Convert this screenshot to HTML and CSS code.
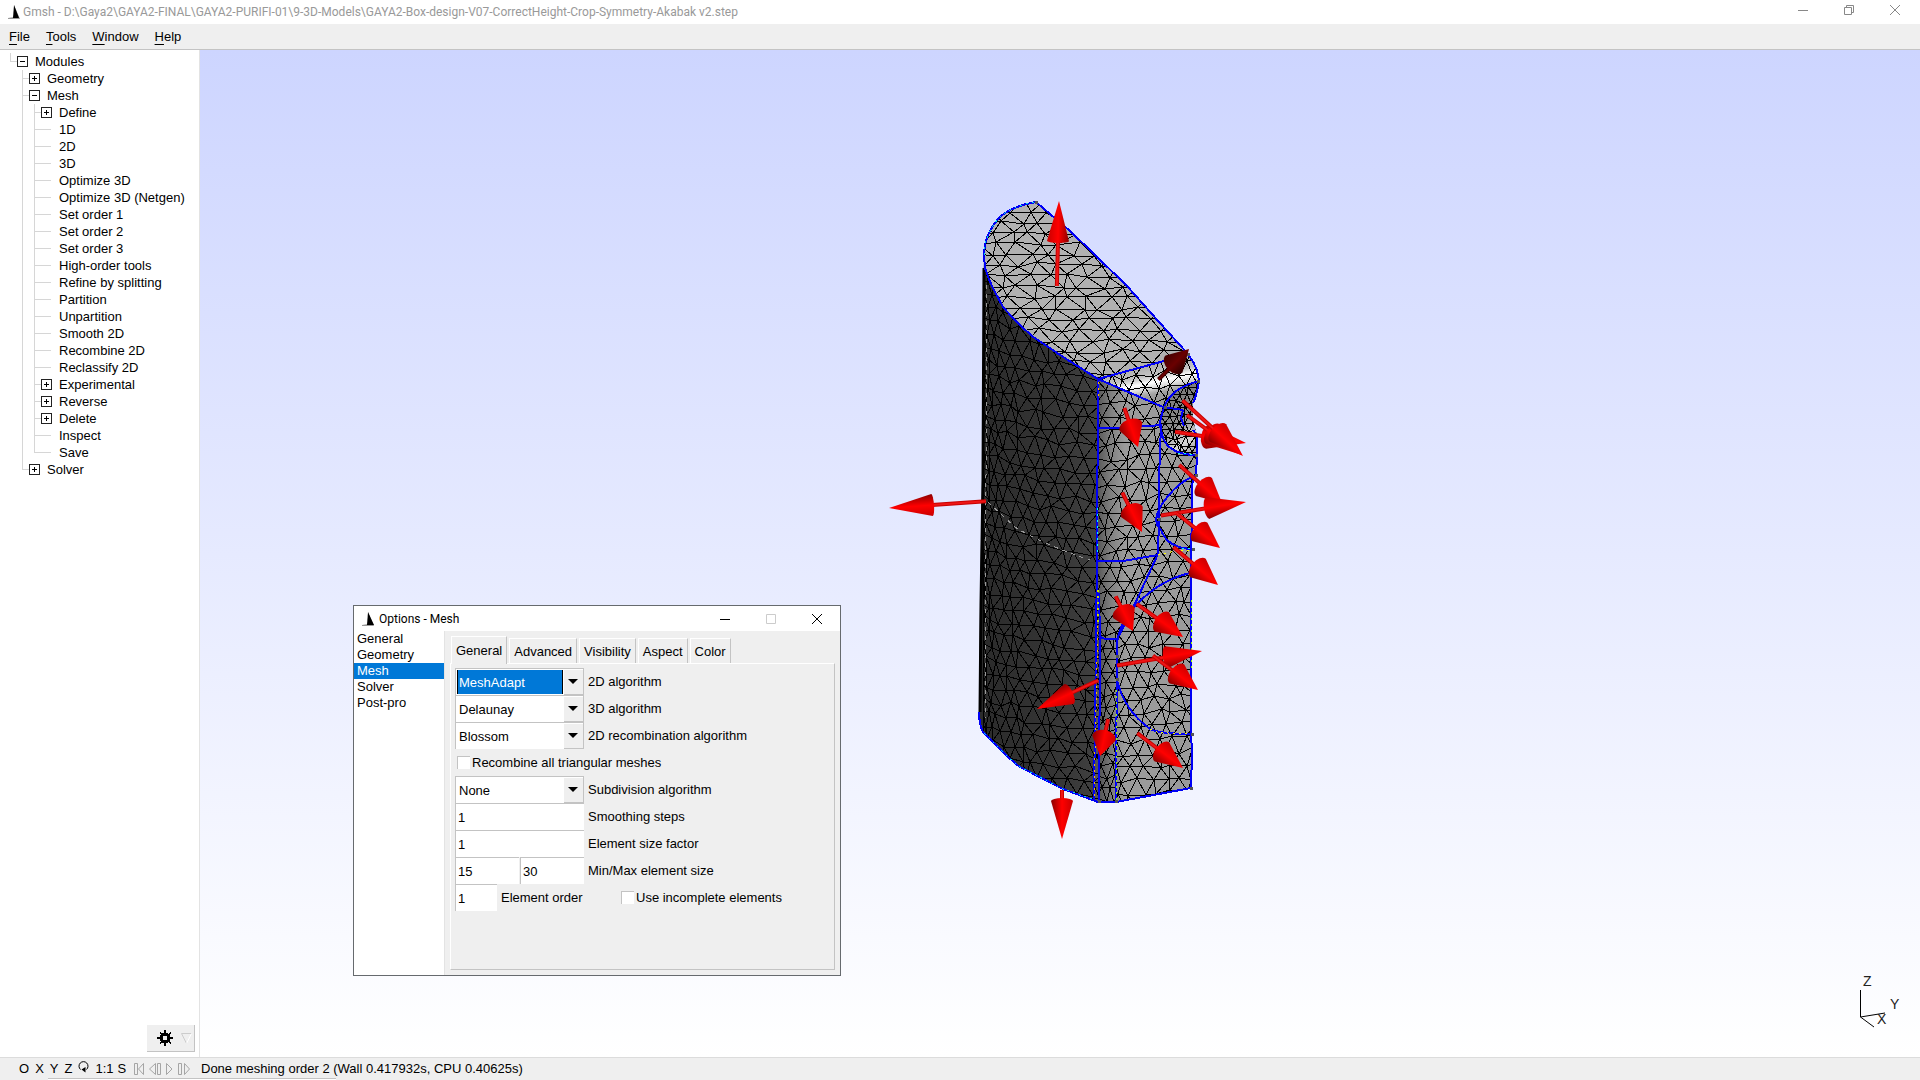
FILE: index.html
```html
<!DOCTYPE html>
<html lang="en">
<head>
<meta charset="utf-8">
<title>Gmsh - D:\Gaya2\GAYA2-FINAL\GAYA2-PURIFI-01\9-3D-Models\GAYA2-Box-design-V07-CorrectHeight-Crop-Symmetry-Akabak v2.step</title>
<link rel="stylesheet" href="styles.css">
</head>
<body>
<div class="app">
  <header class="titlebar">
    <svg class="logo" width="12" height="14" viewBox="0 0 12 14" aria-hidden="true"><path d="M6 0L12 14L0 14L0 13L6 12Z" fill="#999"/><path d="M6 0L11 13H5Z" fill="#000"/></svg>
    <h1 class="caption">Gmsh - D:\Gaya2\GAYA2-FINAL\GAYA2-PURIFI-01\9-3D-Models\GAYA2-Box-design-V07-CorrectHeight-Crop-Symmetry-Akabak v2.step</h1>
    <div class="winbtns winbtns-main">
      <button aria-label="Minimize"><svg width="12" height="12" viewBox="0 0 12 12"><path d="M1 6.500H11"/></svg></button>
      <button aria-label="Restore"><svg width="12" height="12" viewBox="0 0 12 12"><path d="M1.500 3.500H8.500V10.500H1.500ZM3.500 3.500V1.500H10.500V8.500H8.500"/></svg></button>
      <button aria-label="Close"><svg width="12" height="12" viewBox="0 0 12 12"><path d="M1 1L11 11M11 1L1 11"/></svg></button>
    </div>
  </header>

  <nav class="menubar">
    <button><u>F</u>ile</button><button><u>T</u>ools</button><button><u>W</u>indow</button><button><u>H</u>elp</button>
  </nav>

  <main class="workspace">
    <aside class="sidebar">
      <ul class="tree">
        <li class="root"><div class="row"><button class="box minus" aria-label="Collapse Modules"></button>Modules</div>
          <ul>
            <li><div class="row"><button class="box plus" aria-label="Expand Geometry"></button>Geometry</div></li>
            <li><div class="row"><button class="box minus" aria-label="Collapse Mesh"></button>Mesh</div>
              <ul>
                <li><div class="row"><button class="box plus" aria-label="Expand Define"></button>Define</div></li>
                <li class="leaf"><div class="row">1D</div></li>
                <li class="leaf"><div class="row">2D</div></li>
                <li class="leaf"><div class="row">3D</div></li>
                <li class="leaf"><div class="row">Optimize 3D</div></li>
                <li class="leaf"><div class="row">Optimize 3D (Netgen)</div></li>
                <li class="leaf"><div class="row">Set order 1</div></li>
                <li class="leaf"><div class="row">Set order 2</div></li>
                <li class="leaf"><div class="row">Set order 3</div></li>
                <li class="leaf"><div class="row">High-order tools</div></li>
                <li class="leaf"><div class="row">Refine by splitting</div></li>
                <li class="leaf"><div class="row">Partition</div></li>
                <li class="leaf"><div class="row">Unpartition</div></li>
                <li class="leaf"><div class="row">Smooth 2D</div></li>
                <li class="leaf"><div class="row">Recombine 2D</div></li>
                <li class="leaf"><div class="row">Reclassify 2D</div></li>
                <li><div class="row"><button class="box plus" aria-label="Expand Experimental"></button>Experimental</div></li>
                <li><div class="row"><button class="box plus" aria-label="Expand Reverse"></button>Reverse</div></li>
                <li><div class="row"><button class="box plus" aria-label="Expand Delete"></button>Delete</div></li>
                <li class="leaf"><div class="row">Inspect</div></li>
                <li class="leaf"><div class="row">Save</div></li>
              </ul>
            </li>
            <li><div class="row"><button class="box plus" aria-label="Expand Solver"></button>Solver</div></li>
          </ul>
        </li>
      </ul>
      <button class="gear" aria-label="Module options">
        <svg width="16" height="16" viewBox="0 0 16 16" shape-rendering="crispEdges"><path d="M7 0H9V3H11V4L13 2L14 3L12 5H13V7H16V9H13V11H12L14 13L13 14L11 12V13H9V16H7V13H5V12L3 14L2 13L4 11H3V9H0V7H3V5H4L2 3L3 2L5 4V3H7ZM6 6V10H10V6Z" fill="#000" fill-rule="evenodd"/></svg>
        <svg width="11" height="11" viewBox="0 0 11 11"><path d="M10.500 0.500H0.500L5.500 10.500" fill="none" stroke="#ccc"/><path d="M5.500 10.500L10.500 0.500" stroke="#fff"/></svg>
      </button>
    </aside>

    <section class="viewport">
      <svg class="scene" viewBox="200 50 1720 1007" role="img" aria-label="Meshed solid with surface normals">
        <defs>
          <linearGradient id="gSide"><stop offset="0" stop-color="#2b2b2b"/><stop offset=".6" stop-color="#343434"/><stop offset="1" stop-color="#404040"/></linearGradient>
          <linearGradient id="gFront" gradientUnits="userSpaceOnUse" x1="1097" y1="0" x2="1125" y2="0"><stop offset="0" stop-color="#555"/><stop offset=".5" stop-color="#808080"/><stop offset="1" stop-color="#9b9b9b"/></linearGradient>
          <linearGradient id="gFillet" gradientUnits="userSpaceOnUse" x1="1140" y1="366" x2="1147" y2="399"><stop offset="0" stop-color="#aaa"/><stop offset=".35" stop-color="#c4c4c4"/><stop offset=".55" stop-color="#fff"/><stop offset=".75" stop-color="#d0d0d0"/><stop offset="1" stop-color="#999" stop-opacity="0"/></linearGradient>
          <linearGradient id="gLens" gradientUnits="userSpaceOnUse" x1="1160" y1="395" x2="1198" y2="450"><stop offset="0" stop-color="#777"/><stop offset=".5" stop-color="#8c8c8c"/><stop offset=".8" stop-color="#d8d8d8"/><stop offset="1" stop-color="#999"/></linearGradient>
          <linearGradient id="gStrip"><stop offset="0" stop-color="#505050"/><stop offset="1" stop-color="#8c8c8c"/></linearGradient>
          <clipPath id="cTop"><path id="top" d="M1036 202Q1012 206 1000 217Q984 234 984 256L985 268Q989 281 995 292L1003 307Q1016 322 1032 336L1060 355L1098 379L1164 361L1188 354L1159 322L1127 286L1093 253L1070 231Z"/></clipPath>
          <clipPath id="cSide"><path id="side" d="M984 256L985 268Q989 281 995 292L1003 307Q1016 322 1032 336L1060 355L1098 379L1097 560L1096 640L1094 800L1063 789L1020 767Q1008 758 998 747L983 732Q979 724 979 712L980 605L982 480L983 360Z"/></clipPath>
          <clipPath id="cFront"><path id="front" d="M1098 379L1164 361L1188 354Q1194 362 1197 370L1199 381Q1197 395 1193 403V420L1197 435V455L1196 475L1192 484L1190 586V734L1192 752L1191 788L1116 802H1098L1094 800L1096 640L1097 560Z"/></clipPath>
          <clipPath id="cStrip"><path id="strip" d="M1098 590L1100 637L1108 639H1117L1116 802H1098Z"/></clipPath>
          <clipPath id="cLens"><path id="lens" d="M1199 381Q1172 388 1165 405T1161 430Q1164 455 1197 455V435L1193 420V403Z"/></clipPath>
        </defs>
        <use href="#side" fill="url(#gSide)"/>
        <use href="#top" fill="#b1b1b1"/>
        <use href="#front" fill="url(#gFront)"/>
        <path d="M1098 379L1164 361L1188 354L1197 370L1199 381L1164 407Z" fill="url(#gFillet)"/>
        <g class="wire">
          <g clip-path="url(#cSide)"><path id="meshSide"/></g>
          <g clip-path="url(#cTop)"><path id="meshTop"/></g>
          <g clip-path="url(#cFront)"><path id="meshFront"/></g>
        </g>
        <use href="#lens" fill="url(#gLens)"/>
        <use href="#strip" fill="url(#gStrip)"/>
        <g class="wire">
          <g clip-path="url(#cLens)"><path id="meshLens"/></g>
          <g clip-path="url(#cStrip)"><path id="meshStrip"/></g>
        </g>
        <path d="M984 268L983 480L981 605L980 712" stroke="#000" stroke-width="3" fill="none"/>
        <path class="dash" d="M987 285L986 480L985 718M988 502L1015 527Q1040 543 1090 560"/>
        <g class="edge">
          <path d="M1036 202L1070 231L1093 253L1127 286L1159 322L1188 354Q1194 362 1197 370L1199 381Q1197 395 1193 403"/>
          <path d="M1036 202Q1012 206 1000 217Q984 234 984 256L985 268Q989 281 995 292L1003 307Q1016 322 1032 336L1060 355L1098 379L1163 407L1183 410"/>
          <path d="M1098 379L1164 361M1098 379L1097 560L1096 640L1094 800M1099 593L1100 637L1099 802M1117 639L1116 802"/>
          <path d="M1098 428H1120L1162 425M1098 561H1123L1158 555M1100 637Q1104 639 1108 639H1117"/>
          <path d="M1161 425L1159 480V518L1158 554L1133 608L1119 636"/>
          <path d="M1199 381Q1172 388 1165 405T1161 430Q1164 455 1197 455M1183 410L1181 418L1184 426"/>
          <path d="M1196 476Q1180 480 1165 500T1161 530Q1168 549 1194 549"/>
          <path d="M1190 573Q1160 580 1137 604T1117 655V680Q1124 710 1150 729Q1160 734 1192 734"/>
          <path d="M1193 430L1197 435V455L1196 475L1192 484L1191 586V734L1192 752L1191 788L1116 802H1098L1063 789L1020 767Q1008 758 998 747L983 732Q979 724 979 712"/>
        </g>
        <g class="fleck">
          <path d="M1034 202Q1012 206 1000 217Q984 234 984 256" stroke="#00e0e0"/>
          <path d="M1092 799L1063 789L1020 767Q1008 758 998 747L983 732" stroke="#00d0ff"/>
          <path d="M1158 555L1180 550H1190M1150 729Q1160 734 1192 734" stroke="#ff0"/>
          <path d="M1191 600V672M1116 690V800M1098 590V625" stroke="#9f0"/>
          <path d="M1097 590V660L1094 798M1098 382V398" stroke="#fb0"/>
          <path d="M1097 508V552M1178 453L1196 455M1176 548H1192" stroke="#0ff"/>
        </g>
        <path class="nodes" d="M1035 201h3v3h-3zM1187 353h3v3h-3zM1197 380h3v3h-3zM1164 406h3v3h-3zM1195 454h3v3h-3zM1195 474h3v3h-3zM1158 518h3v3h-3zM1192 548h3v3h-3zM1116 655h3v3h-3zM1116 678h3v3h-3zM1191 733h3v3h-3zM1190 787h3v3h-3zM1115 800h3v3h-3zM1098 800h3v3h-3z"/>
        <g id="normals"></g>
        <g class="axes"><path d="M1860.500 990V1017L1885 1013M1860.500 1017L1874 1027"/><text x="1863" y="986">Z</text><text x="1890" y="1009">Y</text><text x="1877" y="1024">X</text></g>
      </svg>

      <form class="dialog" aria-label="Options - Mesh">
        <div class="dialog-title">
          <svg class="logo" width="12" height="14" viewBox="0 0 12 14" aria-hidden="true"><path d="M6 0L12 14L0 14L0 13L6 12Z" fill="#999"/><path d="M6 0L12 13H5Z" fill="#000"/></svg>
          <h2 class="caption">Options - Mesh</h2>
          <div class="winbtns">
            <button type="button" aria-label="Minimize"><svg width="12" height="12" viewBox="0 0 12 12"><path d="M1 6.500H11"/></svg></button>
            <button type="button" aria-label="Maximize" disabled><svg width="12" height="12" viewBox="0 0 12 12"><path d="M1.500 1.500H10.500V10.500H1.500Z"/></svg></button>
            <button type="button" aria-label="Close"><svg width="12" height="12" viewBox="0 0 12 12"><path d="M1 1L11 11M11 1L1 11"/></svg></button>
          </div>
        </div>
        <div class="dialog-body">
          <ul class="cats">
            <li>General</li><li>Geometry</li><li class="on">Mesh</li><li>Solver</li><li>Post-pro</li>
          </ul>
          <div class="tabs-area">
            <div class="tabs" role="tablist">
              <button type="button" role="tab" aria-selected="true" class="tab on">General</button><button type="button" role="tab" class="tab">Advanced</button><button type="button" role="tab" class="tab">Visibility</button><button type="button" role="tab" class="tab">Aspect</button><button type="button" role="tab" class="tab">Color</button>
            </div>
            <div class="panel">
              <div class="field"><span class="combo"><select id="a2" class="on"><option>MeshAdapt</option></select></span><label for="a2">2D algorithm</label></div>
              <div class="field"><span class="combo"><select id="a3"><option>Delaunay</option></select></span><label for="a3">3D algorithm</label></div>
              <div class="field"><span class="combo"><select id="ar"><option>Blossom</option></select></span><label for="ar">2D recombination algorithm</label></div>
              <div class="field"><label class="check"><input type="checkbox">Recombine all triangular meshes</label></div>
              <div class="field"><span class="combo"><select id="as"><option>None</option></select></span><label for="as">Subdivision algorithm</label></div>
              <div class="field"><input class="num wide" id="ss" value="1"><label for="ss">Smoothing steps</label></div>
              <div class="field"><input class="num wide" id="sf" value="1"><label for="sf">Element size factor</label></div>
              <div class="field"><span class="pair"><input class="num" id="mn" value="15"><input class="num" aria-label="Max element size" value="30"></span><label for="mn">Min/Max element size</label></div>
              <div class="field"><input class="num short" id="eo" value="1"><label class="order" for="eo">Element order</label><label class="check"><input type="checkbox">Use incomplete elements</label></div>
            </div>
          </div>
        </div>
      </form>
    </section>
  </main>

  <footer class="status">
    <div class="views"><button>O</button><button>X</button><button>Y</button><button>Z</button><button aria-label="Rotate"><svg width="11" height="12" viewBox="0 0 11 12"><path d="M2.500 8.500A4.500 4.500 0 1 1 8.500 8.500" fill="none" stroke="#000"/><path d="M3.500 8.500L7.500 6V11.500Z" fill="#000"/></svg></button><button class="scale">1:1</button><button>S</button></div>
    <div class="player">
      <button aria-label="First" disabled><svg width="10" height="12" viewBox="0 0 10 12"><path d="M.5.500H3.500V11.500H.5ZM9.500.500V11.500L4.500 6Z"/></svg></button>
      <button aria-label="Back" disabled><svg width="12" height="12" viewBox="0 0 12 12"><path d="M6.500.500V11.500L.500 6ZM8.500.500H11.500V11.500H8.500Z"/></svg></button>
      <button aria-label="Play" disabled><svg width="7" height="12" viewBox="0 0 7 12"><path d="M.5.500V11.500L6 6Z"/></svg></button>
      <button aria-label="Forward" disabled><svg width="12" height="12" viewBox="0 0 12 12"><path d="M.5.500H3.500V11.500H.5ZM6.500.500V11.500L11.500 6Z"/></svg></button>
    </div>
    <output class="message">Done meshing order 2 (Wall 0.417932s, CPU 0.40625s)</output>
    <div class="peek"></div>
  </footer>
</div>
<script src="scene.js"></script>
</body>
</html>
```
FILE: styles.css
```css
* { box-sizing: border-box; }
body { margin: 0; font: 13px/17px "Liberation Sans", Arial, sans-serif; color: #000; background: #efefef; }
button, input, select { font: inherit; color: inherit; margin: 0; padding: 0; border: 0; border-radius: 0; background: none; }
ul { list-style: none; margin: 0; padding: 0; }
.app { display: flex; flex-direction: column; min-height: 100vh; }

.titlebar { display: flex; align-items: center; height: 24px; padding-left: 8px; background: #fff; }
.logo { flex: none; margin-right: 3px; }
.caption { flex: 1; margin: 0; font: 12px/16px Roboto, "Open Sans", sans-serif; white-space: nowrap; overflow: hidden; }
.titlebar .caption { color: #999; }
.winbtns { display: flex; align-self: stretch; }
.winbtns button { width: 46px; display: flex; align-items: center; justify-content: center; }
.winbtns path { fill: none; stroke: #000; }
.winbtns-main { padding-right: 2px; padding-bottom: 4px; }
.winbtns-main path { stroke: #888; }
.winbtns button:disabled path { stroke: #ccc; }

.menubar { display: flex; gap: 16px; height: 26px; padding: 0 9px; border-bottom: 1px solid #c3c3c3; }
.menubar u { text-underline-offset: 3px; }

.workspace { flex: 1; display: flex; }
.sidebar { width: 200px; flex: none; display: flex; flex-direction: column; justify-content: space-between; background: #fff; border-right: 1px solid #e3e3e3; }
.tree { padding: 3px 0 0 10px; white-space: nowrap; }
.row { display: flex; align-items: center; height: 17px; }
.tree li { padding-left: 12px; background: linear-gradient(#d6d6d6, #d6d6d6) 5px 0 / 1px 100% no-repeat, linear-gradient(#d6d6d6, #d6d6d6) 5px 8px / 8px 1px no-repeat; }
.tree li:last-child { background-size: 1px 9px, 8px 1px; }
.tree li.leaf { background-size: 1px 100%, 17px 1px; }
.tree li.leaf:last-child { background-size: 1px 9px, 17px 1px; }
.tree li.root { padding-left: 7px; background-position: 0 0, 0 8px; }
.tree .leaf .row { padding-left: 18px; }
.box { width: 11px; height: 11px; margin-right: 7px; border: 1px solid #222; background: linear-gradient(#000, #000) center / 5px 1px no-repeat, #fff; }
.plus { background: linear-gradient(#000, #000) center / 5px 1px no-repeat, linear-gradient(#000, #000) center / 1px 5px no-repeat, #fff; }
.gear { align-self: flex-end; display: flex; align-items: center; justify-content: flex-end; gap: 8px; width: 48px; height: 27px; margin: 0 4px 5px 0; padding-right: 2px; background: #efefef; border: solid #c3c3c3; border-width: 0 1px 1px 0; }

.viewport { flex: 1; position: relative; min-width: 0; background: linear-gradient(#cdd5ff, #fff); }
.scene { display: block; width: 100%; height: 100%; }
.wire { fill: none; stroke: #000; shape-rendering: crispEdges; }
.edge { fill: none; stroke: #0000f5; stroke-width: 2; shape-rendering: crispEdges; }
.fleck { fill: none; stroke-dasharray: 2 4; shape-rendering: crispEdges; }
.dash { fill: none; stroke: #999; stroke-dasharray: 4 5; shape-rendering: crispEdges; }
.nodes { fill: #555; }
.axes { fill: #222; font-size: 14px; }
.axes path { fill: none; stroke: #000; }

.dialog { position: absolute; left: 153px; top: 555px; width: 488px; min-height: 371px; display: flex; flex-direction: column; background: #efefef; border: 1px solid #666a6e; }
.dialog-title { display: flex; align-items: center; height: 25px; padding-left: 8px; background: #fff; }
.dialog-title .logo { margin-right: 5px; }
.dialog-body { flex: 1; display: flex; }
.cats { width: 91px; background: #fff; border-right: 1px solid #e3e3e3; line-height: 16px; }
.cats li { padding-left: 3px; }
.cats .on { background: #0078d7; color: #fff; }
.tabs-area { flex: 1; display: flex; flex-direction: column; padding: 5px 5px 5px 5px; }
.tabs { display: flex; align-items: flex-end; gap: 2px; height: 27px; padding-left: 1px; }
.tab { height: 25px; padding: 0 4px; border: 1px solid #fff; border-right-color: #c3c3c3; border-bottom: 0; }
.tab.on { height: 28px; margin-bottom: -1px; background: #efefef; z-index: 1; }
.panel { flex: 1; padding: 4px; border: 1px solid #c3c3c3; border-top-color: #fff; border-left-color: #fff; }
.field { display: flex; align-items: center; gap: 4px; height: 27px; white-space: nowrap; }
.combo { position: relative; width: 129px; height: 27px; padding: 1px 0 1px 1px; background: #fff; border: solid #c3c3c3; border-width: 1px 1px 0 1px; }
.combo select { appearance: none; width: 106px; height: 24px; padding: 0 2px; display: block; }
.combo select.on { background: #0078d7; color: #fff; border: solid #000; border-width: 0 1px; padding: 0 1px; }
.combo::before { content: ""; position: absolute; right: 0; top: 1px; width: 19px; height: 24px; background: #efefef; border-bottom: 1px solid #c3c3c3; pointer-events: none; }
.combo::after { content: ""; position: absolute; right: 5px; top: 10px; border: 5px solid transparent; border-top-color: #000; border-bottom: 0; pointer-events: none; }
.num { min-width: 0; height: 27px; padding-left: 2px; background: #fff; border: solid #c3c3c3; border-width: 1px 0 0 1px; }
.wide, .pair { width: 129px; }
.pair { display: flex; gap: 1px; }
.pair .num { flex: 1; }
.short { width: 42px; }
.order { width: 114px; }
.check { display: flex; align-items: center; gap: 2px; padding-left: 2px; }
.check input { appearance: none; width: 13px; height: 13px; background: #fff; border: solid #c3c3c3; border-width: 1px 0 0 1px; }

.status { position: relative; display: flex; align-items: center; height: 23px; padding: 0 0 1px 19px; border-top: 1px solid #dcdcdc; }
.views { display: flex; align-items: center; gap: 6px; width: 115px; }
.views .scale { margin-right: -2px; }
.player { display: flex; gap: 5px; width: 67px; }
.player button { display: flex; }
.player path { fill: none; stroke: #a5a5a5; }
.peek { position: absolute; left: 48px; bottom: 0; width: 288px; height: 2px; background: #fff; border-top: 1px solid #c3c3c3; }
```
FILE: scene.js
```js
// Seeded generator, so that the mesh is the same on each load.
let seed = 7;
function rnd() { seed = (seed * 16807) % 2147483647; return seed / 2147483647; }

function circle(a, b, c) {
  const d = 2 * (a[0] * (b[1] - c[1]) + b[0] * (c[1] - a[1]) + c[0] * (a[1] - b[1]));
  const A = a[0] * a[0] + a[1] * a[1], B = b[0] * b[0] + b[1] * b[1], C = c[0] * c[0] + c[1] * c[1];
  const x = (A * (b[1] - c[1]) + B * (c[1] - a[1]) + C * (a[1] - b[1])) / d;
  const y = (A * (c[0] - b[0]) + B * (a[0] - c[0]) + C * (b[0] - a[0])) / d;
  return [x, y, (x - a[0]) ** 2 + (y - a[1]) ** 2];
}

// Bowyer-Watson triangulation; returns the unique edges as index pairs.
function delaunay(pts) {
  const n = pts.length, p = pts.concat([[-9000, -9000], [9000, -9000], [0, 9000]]);
  let tris = [{ v: [n, n + 1, n + 2], c: circle(p[n], p[n + 1], p[n + 2]) }];
  for (let i = 0; i < n; i++) {
    const rim = new Map(), keep = [];
    for (const t of tris) {
      if ((p[i][0] - t.c[0]) ** 2 + (p[i][1] - t.c[1]) ** 2 < t.c[2]) {
        for (let k = 0; k < 3; k++) {
          const a = t.v[k], b = t.v[(k + 1) % 3], key = Math.min(a, b) + "_" + Math.max(a, b);
          if (rim.has(key)) rim.delete(key); else rim.set(key, [a, b]);
        }
      } else keep.push(t);
    }
    for (const [a, b] of rim.values()) keep.push({ v: [a, b, i], c: circle(p[a], p[b], p[i]) });
    tris = keep;
  }
  const edges = new Map();
  for (const t of tris) for (let k = 0; k < 3; k++) {
    const a = t.v[k], b = t.v[(k + 1) % 3];
    if (a < n && b < n) edges.set(Math.min(a, b) + "_" + Math.max(a, b), [a, b]);
  }
  return [...edges.values()];
}

// Staggered, jittered points on a w x h patch with unit spacing, mapped to the face.
function mesh(id, w, h, map) {
  const pts = [];
  for (let j = -1; j <= h + 1; j++)
    for (let i = -1; i <= w + 1; i++)
      pts.push([i + (j % 2 ? 0.5 : 0) + (rnd() - 0.5) * 0.5, j * 0.9 + (rnd() - 0.5) * 0.4]);
  const q = pts.map(([u, v]) => map(u, v).map(Math.round));
  document.getElementById(id).setAttribute("d",
    delaunay(pts).map(([a, b]) => "M" + q[a] + "L" + q[b]).join(""));
}

mesh("meshSide", 10, 42, (u, v) => { const s = Math.max(0, u / 10); return [983 + 115 * Math.pow(s, 1.4), 245 + v * 15 - 20 * (1 - s)]; });
mesh("meshTop", 13, 17, (u, v) => [960 + u * 20, 200 + v * 12]);
mesh("meshFront", 8, 34, (u, v) => [1096 + u * 14, 352 + v * 15 - u]);
mesh("meshLens", 6, 11, (u, v) => [1158 + u * 7, 380 + v * 8]);
mesh("meshStrip", 2, 19, (u, v) => [1098 + u * 9, 590 + v * 13]);

const SVG = "http://www.w3.org/2000/svg";
function add(name, attrs, parent) {
  const e = document.createElementNS(SVG, name);
  for (const k in attrs) e.setAttribute(k, attrs[k]);
  parent.appendChild(e);
  return e;
}

// Surface normals: tail, centre of the cone's base, tip, bulge of the base, colours.
const RED = ["#8c0000", "#ff0000", "#c80000"], DARK = ["#2a0000", "#6a0000", "#400000"];
const normals = [
  [1058, 286, 1058, 241, 1059, 201, 2, RED], [1062, 790, 1062, 801, 1062, 839, 3, RED],
  [986, 502, 932, 505, 889, 508, 2, RED], [1158, 379, 1174, 364, 1189, 349, 8, DARK],
  [1122, 409, 1131, 427, 1138, 447, 8, RED], [1120, 494, 1132, 512, 1142, 532, 8, RED],
  [1175, 432, 1208, 437, 1246, 443, 7, RED], [1187, 415, 1213, 434, 1242, 455, 7, RED],
  [1185, 398, 1218, 433, 1243, 456, 7, RED],
  [1177, 468, 1204, 487, 1222, 503, 7, RED], [1161, 516, 1208, 508, 1246, 502, 4, RED],
  [1176, 514, 1200, 532, 1220, 548, 7, RED],
  [1172, 549, 1198, 568, 1218, 585, 7, RED], [1113, 598, 1124, 613, 1133, 631, 8, RED],
  [1136, 605, 1162, 622, 1183, 637, 7, RED], [1117, 665, 1167, 657, 1202, 651, 4, RED],
  [1152, 657, 1177, 674, 1198, 690, 7, RED], [1098, 680, 1069, 694, 1037, 709, 4, RED],
  [1108, 719, 1104, 738, 1100, 756, 8, RED], [1136, 735, 1162, 752, 1183, 768, 7, RED]
];
const layer = document.getElementById("normals");
normals.forEach(([x0, y0, x1, y1, x2, y2, m, tone], i) => {
  const angle = Math.atan2(y2 - y1, x2 - x1) * 180 / Math.PI;
  const cone = Math.hypot(x2 - x1, y2 - y1), shaft = Math.hypot(x1 - x0, y1 - y0);
  const r = m > 4 ? 12 : 11;
  const g = add("g", { transform: `translate(${x1} ${y1}) rotate(${angle})` }, layer);
  const grad = add("linearGradient", { id: "tone" + i, x1: 0, y1: 1, x2: 0, y2: 0 }, g);
  tone.forEach((c, k) => add("stop", { offset: [0, 0.5, 1][k], "stop-color": c }, grad));
  add("rect", { x: -shaft, y: -2, width: shaft, height: 4, fill: tone[2] }, g);
  add("rect", { x: -shaft, y: -1, width: shaft, height: 2, fill: tone === RED ? "#ee1515" : tone[1] }, g);
  add("path", { d: `M${cone} 0L0 ${-r}A${m} ${r} 0 0 0 0 ${r}Z`, fill: `url(#tone${i})` }, g);
});
```
